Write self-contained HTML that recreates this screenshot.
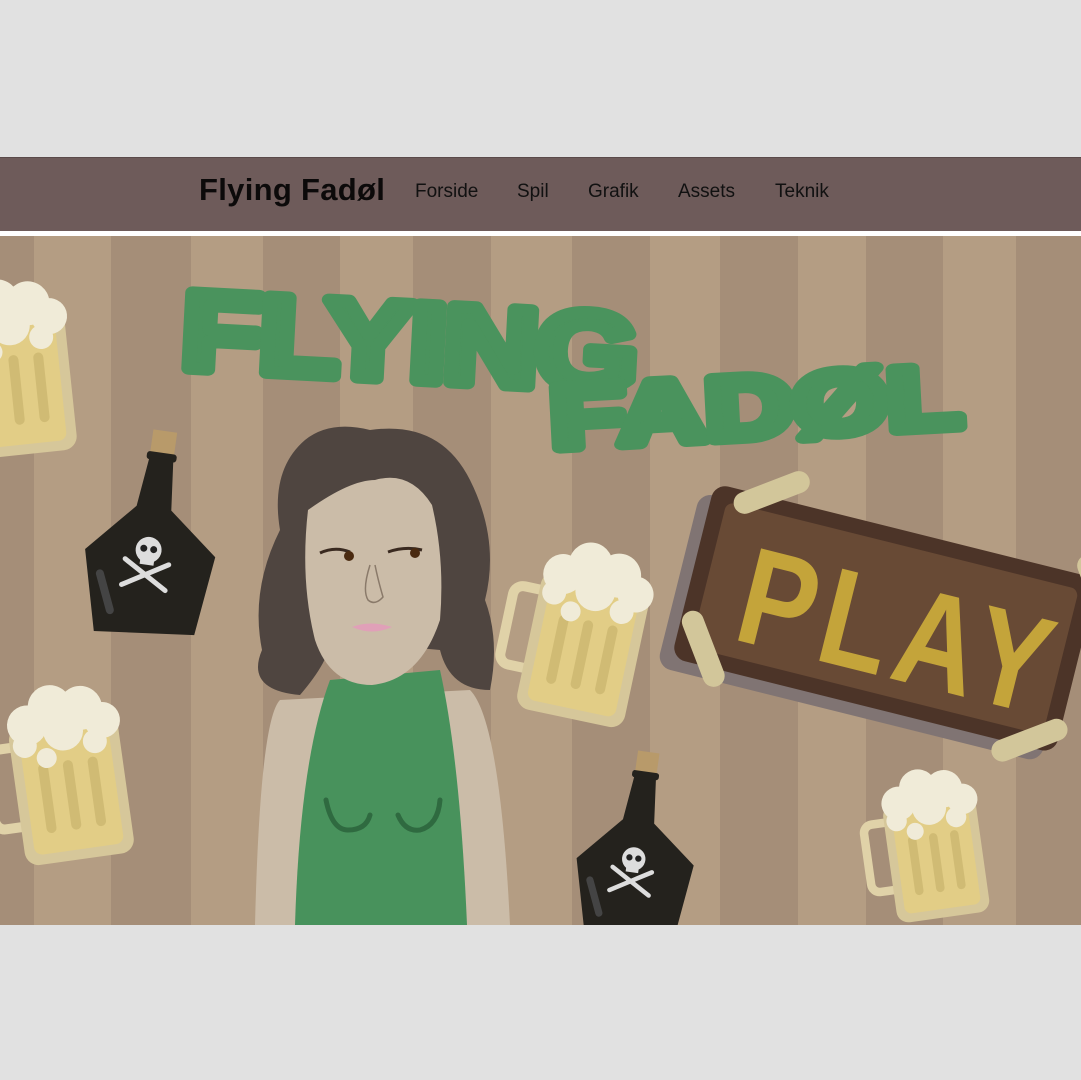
<!DOCTYPE html>
<html><head><meta charset="utf-8"><style>
html,body{margin:0;padding:0;background:#e1e1e1;width:1081px;height:1080px;overflow:hidden;font-family:"Liberation Sans",sans-serif}
.nav{position:absolute;left:0;top:157px;width:1081px;height:74px;background:#6e5b5a;border-top:1px solid #5a4a4a}
.logo{position:absolute;left:199px;top:14px;font-size:31px;font-weight:bold;color:#0c0a0a;letter-spacing:0.3px}
.nav a{position:absolute;top:23px;font-size:19px;color:#111;text-decoration:none}
.white{position:absolute;left:0;top:231px;width:1081px;height:5px;background:#fff}
svg{position:absolute;left:0;top:236px}
</style></head><body>
<div class="nav"><div class="logo">Flying Fadøl</div>
<a style="left:415px">Forside</a><a style="left:517px">Spil</a><a style="left:588px">Grafik</a><a style="left:678px">Assets</a><a style="left:775px">Teknik</a></div>
<div class="white"></div>
<svg width="1081" height="689" viewBox="0 236 1081 689">
<g>
<rect x="0" y="236" width="1081" height="689" fill="#a58e78"/>
<g fill="#b49d83">
<rect x="34" y="236" width="77" height="689"/><rect x="191" y="236" width="72" height="689"/><rect x="340" y="236" width="73" height="689"/><rect x="491" y="236" width="81" height="689"/><rect x="650" y="236" width="70" height="689"/><rect x="798" y="236" width="68" height="689"/><rect x="943" y="236" width="73" height="689"/>
</g>
</g>
<!-- title -->
<g font-family="Liberation Sans,sans-serif" font-weight="bold" fill="#4a935d" stroke="#4a935d" stroke-width="12" stroke-linejoin="round">
<text transform="translate(180 368) rotate(3) scale(1.25 1.05)" font-size="105" letter-spacing="-2">FLYING</text>
<text transform="translate(552 448) rotate(-3) scale(1.38 1)" font-size="88" letter-spacing="0">FADØL</text>
</g>
<!-- beers -->
<defs>
<g id="beer">
<path d="M-50 -40 h-20 a10 10 0 0 0 -10 10 v60 a10 10 0 0 0 10 10 h20" fill="none" stroke="#e0d2a8" stroke-width="10"/>
<rect x="-55" y="-60" width="110" height="140" rx="14" fill="#d6c79a"/>
<rect x="-45" y="-50" width="90" height="120" rx="8" fill="#e2cd86"/>
<g fill="#d0bb74"><rect x="-30" y="-20" width="10" height="70" rx="5"/><rect x="-5" y="-20" width="10" height="70" rx="5"/><rect x="20" y="-20" width="10" height="70" rx="5"/></g>
<g fill="#f0ebd8"><circle cx="-35" cy="-60" r="20"/><circle cx="-10" cy="-75" r="22"/><circle cx="20" cy="-70" r="22"/><circle cx="40" cy="-55" r="18"/><circle cx="0" cy="-50" r="20"/><circle cx="-40" cy="-40" r="12"/><circle cx="30" cy="-35" r="12"/><circle cx="-20" cy="-25" r="10"/></g>
</g>
<g id="bottle">
<rect x="-12" y="-110" width="24" height="24" fill="#b89a6a"/>
<rect x="-15" y="-88" width="30" height="8" rx="3" fill="#24221d"/>
<path d="M-12 -82 h24 l5 50 l50 40 l-10 80 l-100 10 l-20 -80 l45 -50 z" fill="#24221d"/>
<path d="M-45 40 l15 35" stroke="#444" stroke-width="8" stroke-linecap="round"/>
<g fill="#ddd"><circle cx="0" cy="10" r="13"/><rect x="-7" y="15" width="14" height="10"/><path d="M-22 22 L22 48 M22 22 L-22 48" stroke="#ddd" stroke-width="5" stroke-linecap="round"/></g>
<circle cx="-5" cy="9" r="3.5" fill="#222"/><circle cx="5" cy="9" r="3.5" fill="#222"/>
</g>
</defs>
<use href="#beer" transform="translate(15 375) rotate(-6)"/>
<use href="#beer" transform="translate(70 780) rotate(-8)"/>
<use href="#beer" transform="translate(585 640) rotate(12)"/>
<use href="#beer" transform="translate(935 850) rotate(-8) scale(0.85)"/>
<use href="#bottle" transform="translate(150 540) rotate(8)"/>
<use href="#bottle" transform="translate(635 850) rotate(8) scale(0.9)"/>
<!-- play sign -->
<g transform="translate(5 -12) rotate(14 870 630)">
<rect x="670" y="550" width="395" height="180" rx="14" fill="#807473"/>
<rect x="682" y="538" width="395" height="180" rx="14" fill="#4c3428"/>
<rect x="698" y="553" width="363" height="150" rx="8" fill="#684a35"/>
<text transform="translate(735 685) scale(0.95 1.15)" font-family="Liberation Sans,sans-serif" font-size="120" font-weight="bold" fill="#c4a43a" letter-spacing="8">PLAY</text>
<g fill="#d2c69a"><rect x="700" y="522" width="80" height="22" rx="11" transform="rotate(-35 740 534)"/><rect x="1040" y="540" width="80" height="22" rx="11" transform="rotate(55 1080 552)"/><rect x="670" y="690" width="80" height="22" rx="11" transform="rotate(55 710 702)"/><rect x="1010" y="700" width="80" height="22" rx="11" transform="rotate(-35 1050 712)"/></g>
</g>
<!-- person -->
<path d="M280 700 Q260 720 255 925 H510 Q500 720 470 690 Z" fill="#cbbca8"/>
<path d="M330 680 Q300 760 295 925 H467 Q460 760 440 670 Z" fill="#48925c"/>
<path d="M305 440 Q270 470 280 530 Q250 590 262 650 Q245 690 300 695 Q330 660 330 640 L440 650 Q450 690 490 690 Q500 640 485 600 Q500 540 470 480 Q440 420 370 430 Q330 420 305 440Z" fill="#4f4540"/>
<path d="M308 510 Q350 480 375 480 Q410 470 432 505 Q445 560 440 620 Q420 680 372 685 Q330 685 315 640 Q300 580 308 510Z" fill="#cbbca8"/>
<path d="M320 553 Q335 546 350 552 M388 552 Q405 546 422 550" stroke="#3a2a20" stroke-width="3" fill="none"/>
<circle cx="349" cy="556" r="5" fill="#4a2a10"/><circle cx="415" cy="553" r="5" fill="#4a2a10"/>
<path d="M370 565 Q362 590 368 600 Q375 606 383 597 Q378 580 375 565" stroke="#8a7a6a" stroke-width="1.5" fill="none"/>
<path d="M352 627 Q370 620 392 627 Q372 636 352 627Z" fill="#e0a0b8"/>
<path d="M326 800 Q332 830 348 830 Q366 830 370 815 M398 815 Q405 832 420 830 Q438 825 440 800" stroke="#2f6a40" stroke-width="5" fill="none" stroke-linecap="round"/>
</svg>
</body></html>
